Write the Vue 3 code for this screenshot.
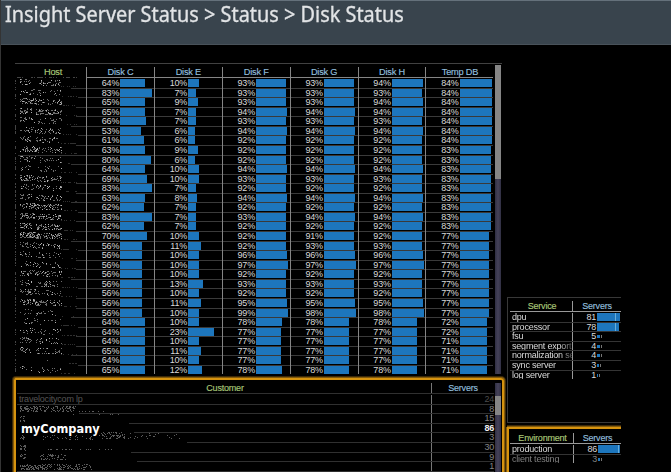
<script setup>
const pct = (s) => s.split(' ').map(Number)
const columns = [
  { name: 'Disk C', scale: 0.389, values: pct('64 83 65 65 66 53 61 63 80 64 69 83 63 62 83 62 70 56 56 56 56 56 56 56 56 64 64 64 65 64 65') },
  { name: 'Disk E', scale: 1.14, values: pct('10 7 9 7 7 6 6 9 6 10 10 7 8 7 7 7 10 11 10 10 10 13 10 11 10 10 23 10 11 10 12') },
  { name: 'Disk F', scale: 0.328, values: pct('93 93 93 94 93 94 92 92 92 94 93 92 94 92 93 92 92 92 96 97 92 93 92 95 99 78 77 77 77 77 78') },
  { name: 'Disk G', scale: 0.328, values: pct('93 93 93 94 93 94 92 92 92 94 93 92 94 92 94 92 91 93 96 97 92 93 92 95 98 78 77 77 77 77 78') },
  { name: 'Disk H', scale: 0.328, values: pct('94 93 94 94 93 94 92 92 92 94 93 92 94 92 94 92 92 93 96 97 92 93 92 95 98 78 77 77 77 77 78') },
  { name: 'Temp DB', scale: 0.382, values: pct('84 84 84 84 84 84 84 83 83 83 83 83 83 83 83 83 77 77 77 77 77 77 77 77 77 72 72 71 71 71 71') },
]

// Deterministic speckle used to redact names.
function speckle(seed, spots) {
  let s = seed
  const rnd = () => {
    s = (s + 0x6d2b79f5) | 0
    let t = Math.imul(s ^ (s >>> 15), 1 | s)
    t = (t + Math.imul(t ^ (t >>> 7), 61 | t)) ^ t
    return ((t ^ (t >>> 14)) >>> 0) / 4294967296
  }
  let d = ''
  for (const [x, y, w, h, density] of spots) {
    for (let j = 0; j < h; j++)
      for (let i = 0; i < w; i++)
        if (rnd() < density) d += `M${x + i} ${y + j}h1v1h-1z`
  }
  return d
}
const rowTop = (i) => Math.round(2 + i * 9.567)
const hostDensity = [0.2, 0.13, 0.25, 0.3, 0.14, 0.2, 0.16, 0.26, 0.14, 0.09, 0.3, 0.15, 0.2, 0.3, 0.28, 0.36, 0.4, 0.14, 0.18, 0.1, 0.22, 0.18, 0.16, 0.3, 0.12, 0.1, 0.1, 0.2, 0.14, 0.01, 0.12]
const hostSpots = []
const trailSpots = []
hostDensity.forEach((d, i) => {
  hostSpots.push([5, rowTop(i), i % 3 ? 16 : 12, 6, d], [21, rowTop(i) + 1, 26, 6, d * 0.85])
  trailSpots.push([46, rowTop(i) + 7, 16, 1, 0.4])
})
const hostNoise = speckle(71, hostSpots)
const hostBright = speckle(19, hostSpots.map(([x, y, w, h, d]) => [x, y, w, h, d * 0.3]))
const trailNoise = speckle(9, trailSpots)
const edgeNoise = speckle(33, [[0, 0, 1, 295, 0.5], [2, 0, 40, 1, 0.4], [48, 0, 14, 1, 0.5]])
const customerNoise = speckle(52, [
  [3, 1, 18, 6, 0.4], [22, 1, 37, 6, 0.3], [60, 6, 30, 1, 0.3], [3, 11, 5, 6, 0.4], [50, 9, 60, 1, 0.15],
  [3, 30, 5, 5, 0.35], [26, 30, 50, 5, 0.12], [82, 27, 26, 7, 0.24], [110, 28, 56, 6, 0.08], [3, 40, 6, 6, 0.35],
  [30, 44, 70, 1, 0.25], [3, 49, 6, 6, 0.4], [23, 49, 26, 6, 0.28], [3, 59, 32, 6, 0.4], [37, 59, 38, 6, 0.28],
])

const customers = [24, 8, 15, 86, 3, 30, 9, 1]
const services = [
  { name: 'dpu', count: 81, bar: 23, tick: 18 },
  { name: 'processor', count: 78, bar: 22, tick: 18 },
  { name: 'fsu', count: 5, bar: 3 },
  { name: 'segment export', count: 4, bar: 3 },
  { name: 'normalization se', count: 4, bar: 3 },
  { name: 'sync server', count: 3, bar: 2 },
  { name: 'log server', count: 1, bar: 1 },
]
const environments = [
  { name: 'production', count: 86, bar: 22, tick: 20 },
  { name: 'client testing', count: 3, bar: 2, dim: true },
]
</script>

<template>
  <div class="page">
    <header class="title"><h1>Insight Server Status &gt; Status &gt; Disk Status</h1></header>
    <main class="workspace">
      <div class="left">
        <section class="disks">
          <div class="host">
            <div class="head key">Host</div>
            <div class="lines"><i v-for="n in 31" :key="n" :class="['cut' + (n % 4), { full: n === 8 }]"></i></div>
            <svg class="noise" width="70" height="297" shape-rendering="crispEdges">
              <path :d="hostNoise" fill="#6c6c6c" /><path :d="hostBright" fill="#b0b0b0" /><path :d="trailNoise" fill="#303030" /><path :d="edgeNoise" fill="#444" />
            </svg>
          </div>
          <div v-for="c in columns" :key="c.name" class="col">
            <div class="head metric">{{ c.name }}</div>
            <div v-for="(v, i) in c.values" :key="i" class="cell">
              <span class="pct">{{ v }}%</span><span class="bar" :style="{ width: v * c.scale + 'px' }"></span>
            </div>
          </div>
          <div class="track"><div class="thumb"></div></div>
        </section>
        <section class="customers">
          <div class="ctable">
            <div class="crow chead"><span class="cname key">Customer</span><span class="cnum metric">Servers</span></div>
            <div v-for="(n, i) in customers" :key="i" class="crow" :class="['c' + i, { bright: i === 3 }]">
              <span class="cname">{{ i === 0 ? 'travelocitycom lp' : '' }}</span><span class="cnum">{{ n }}</span>
            </div>
            <svg class="cnoise" width="170" height="66" shape-rendering="crispEdges">
              <path class="veil" d="M0 7h62v3H0zM0 17h112v3H0zM0 26h117v4H0zM0 36h170v3H0zM0 45h114v4H0zM0 55h120v4H0z" />
              <path :d="customerNoise" fill="#5c5c5c" />
            </svg>
            <b class="company">myCompany</b>
          </div>
          <div class="track small"><div class="thumb"></div></div>
        </section>
      </div>
      <div class="right">
        <section class="services">
          <div class="srow shead"><span class="sname key">Service</span><span class="metric snum">Servers</span></div>
          <div v-for="s in services" :key="s.name" class="srow">
            <span class="sname"><span class="label">{{ s.name }}</span></span><span class="count">{{ s.count }}</span>
            <span class="sbar" :class="{ tiny: !s.tick }" :style="{ width: s.bar + 'px' }"><i v-if="s.tick" :style="{ left: s.tick + 'px' }"></i></span>
            <i v-if="!s.tick" class="mark"></i>
          </div>
        </section>
        <section class="environments">
          <div class="srow shead"><span class="sname key">Environment</span><span class="metric snum">Servers</span></div>
          <div v-for="s in environments" :key="s.name" class="srow" :class="{ dim: s.dim }">
            <span class="sname"><span class="label">{{ s.name }}</span></span><span class="count">{{ s.count }}</span>
            <span class="sbar" :class="{ tiny: !s.tick }" :style="{ width: s.bar + 'px' }"><i v-if="s.tick" :style="{ left: s.tick + 'px' }"></i></span>
            <i v-if="!s.tick" class="mark"></i>
          </div>
        </section>
      </div>
    </main>
  </div>
</template>

<style>
body { margin: 0; background: #000; overflow: hidden; }
</style>
<style scoped>
* { box-sizing: border-box; }
.page { width: 671px; height: 472px; overflow: hidden; background: #000; border-left: 1px solid #343434; font: 9px/9px "Liberation Sans", Arial, sans-serif; letter-spacing: -.2px; color: #dadada; display: flex; flex-direction: column; }
.title { height: 45px; flex: none; background: #39444d; border-top: 1px solid #65717b; border-bottom: 1px solid #49525a; padding-left: 4px; }
h1 { margin: 0; font: 400 21px/26px "Noto Sans", sans-serif; letter-spacing: 0; color: #e2e4e6; white-space: nowrap; transform: scaleX(.947); transform-origin: 0 0; -webkit-text-stroke: .3px #e2e4e6; }
.workspace { display: flex; flex: 1; min-height: 0; padding: 18px 0 0 13px; }
.left { width: 492px; display: flex; flex-direction: column; flex: none; }
.key { color: #a9c878; }
.metric { color: #92bfdd; }
.disks { width: 487px; height: 311px; flex: none; margin-left: 1px; border-top: 1px solid #414141; display: flex; overflow: hidden; }
.host { width: 72px; flex: none; position: relative; border-right: 1px solid #858585; margin-top: 3px; }
.head { height: 11px; text-align: center; font-size: 9.2px; line-height: 10px; border-bottom: 1px solid #858585; -webkit-text-stroke: .15px; }
.host .head { border: 0; padding-left: 5px; }
.lines { display: flex; flex-direction: column; align-items: flex-end; padding-top: 1px; }
.lines i { height: 9.567px; border-bottom: 1px solid #343434; width: 10px; }
.lines .cut1 { width: 15px; }
.lines .cut2 { width: 8px; }
.lines .full { width: 68px; }
.noise { position: absolute; left: 0; top: 10px; }
.col { width: 67.9px; flex: none; margin-top: 3px; border-right: 1px solid #858585; }
.col .head { margin-bottom: 1px; }
.cell { height: 9.567px; display: flex; align-items: flex-start; border-bottom: 1px solid #3a3a3a; }
.pct { width: 32.2px; text-align: right; }
.bar { height: 8px; margin-left: 1px; background: #1d76bd; }
.col:nth-of-type(7) { border-right: 0; width: 67px; }
.track { width: 6px; margin: 1px 1px 0 auto; background: linear-gradient(90deg, #302f43, #454259, #302f43); }
.thumb { height: 114px; background: #858585; }
.customers { flex: 1; border: 2px solid #d6930f; border-bottom: 0; border-radius: 2px 3px 0 0; box-shadow: 0 0 0 1px #835a0b, 0 0 0 2px #3d2a08; margin-top: 4px; width: 490px; display: flex; padding: 3px 0 0 1px; position: relative; }
.ctable { width: 477px; position: relative; }
.crow { height: 9.6px; display: flex; border-bottom: 1px solid #303030; color: #858585; }
.chead { height: 11px; line-height: 11px; -webkit-text-stroke: .15px; }
.cname { width: 415px; flex: none; padding-left: 2px; border-right: 1px solid #777; color: #555; }
.chead .key { text-align: center; color: #a9c878; }
.cnum { flex: 1; text-align: right; }
.chead .metric { text-align: center; }
.c0 { margin-top: 1px; color: #4c4c4c; }
.bright { color: #eee; font-weight: 700; }
.cnoise { position: absolute; left: 0; top: 22px; }
.veil { fill: #000; }
.company { position: absolute; left: 4px; top: 39px; color: #fff; font: 700 11.4px/14px "DejaVu Sans", sans-serif; letter-spacing: 0; }
.small { margin: 0 1px 0 auto; }
.small .thumb { height: 19px; margin-top: 13px; }
.right { width: 114px; padding-top: 234px; display: flex; flex-direction: column; margin-left: 1px; }
.services { height: 126px; flex: none; border: 1px solid #383838; border-right: 0; padding: 3px 0 0 2px; }
.srow { height: 9.6px; display: flex; border-bottom: 1px solid #343434; position: relative; }
.shead { height: 11px; line-height: 10px; border-color: #999; margin-bottom: 1px; -webkit-text-stroke: .15px; }
.srow:last-child { border-color: transparent; }
.sname { width: 63px; padding-left: 2px; border-right: 1px solid #999; white-space: nowrap; overflow: hidden; flex: none; }
.label { display: block; width: 60px; overflow: hidden; mask-image: linear-gradient(90deg, #000 48px, rgba(0, 0, 0, .3) 60px); }
.shead .sname { text-align: center; }
.snum { flex: 1; text-align: center; }
.count { width: 23px; text-align: right; }
.sbar { height: 8px; margin-left: 1px; background: #1d76bd; position: relative; flex: none; }
.sbar i { position: absolute; top: 0; width: 1px; height: 8px; background: #69add9; }
.tiny { height: 3px; margin-top: 3px; }
.mark { width: 1px; height: 3px; margin: 3px 0 0 1px; background: #777; }
.environments { flex: 1; margin-top: 4px; border-top: 2px solid #d6930f; border-left: 2px solid #d6930f; box-shadow: 0 -1px 0 #835a0b, 0 -2px 0 #3d2a08, -1px 0 0 #835a0b, -2px 0 0 #3d2a08; padding: 4px 0 0 1px; }
.environments .sname { width: 64px; }
.dim { color: #808080; }
</style>
